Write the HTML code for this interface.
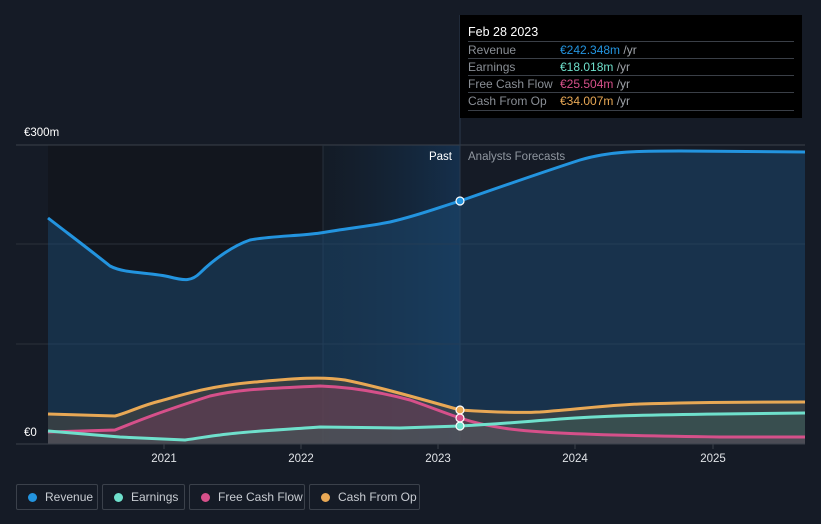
<!DOCTYPE html>
<html><head><style>
html,body{margin:0;background:#151b26;width:821px;height:524px;overflow:hidden;font-family:"Liberation Sans",sans-serif;}
.tt{position:absolute;left:460px;top:15px;width:342px;height:103px;background:#000;}
.tt .h{position:absolute;left:8px;top:10px;color:#fff;font-size:12.5px;}
.tt .r{position:absolute;left:8px;width:326px;height:17px;border-top:1px solid #3a3f47;font-size:12px;color:#8a8f96;line-height:17px;white-space:nowrap;}
.tt .r span{position:absolute;left:92px;}
.tt .r i{font-style:normal;color:#a0a4aa;}
.lg{position:absolute;top:484px;height:26px;border:1px solid #3b414b;border-radius:2px;color:#c8ccd2;font-size:12px;line-height:24px;box-sizing:border-box;white-space:nowrap;}
.lg b{position:absolute;left:11px;top:8px;width:9px;height:9px;border-radius:50%;}
.lg span{position:absolute;left:28px;}
</style></head><body>
<svg width="821" height="524" style="position:absolute;left:0;top:0">
<defs>
<linearGradient id="hl" x1="0" x2="1" y1="0" y2="0"><stop offset="0" stop-color="#16283a" stop-opacity="0.3"/><stop offset="1" stop-color="#17406a" stop-opacity="0.6"/></linearGradient>
</defs>
<rect x="48" y="145" width="412" height="299" fill="#12161e"/>
<rect x="323" y="145" width="137" height="299" fill="url(#hl)"/>
<line x1="16" y1="145" x2="805" y2="145" stroke="#3a404a"/>
<line x1="16" y1="244" x2="805" y2="244" stroke="#2a303a"/>
<line x1="16" y1="344" x2="805" y2="344" stroke="#2a303a"/>
<line x1="323" y1="145" x2="323" y2="444" stroke="#26303c"/>
<line x1="460" y1="15" x2="460" y2="444" stroke="#2a3a4c"/>
<path d="M48,218 C70,235 90,250 110,266 C125,274 150,272 170,277 C185,281 192,281 200,273 C215,258 235,245 250,240 C270,236 300,236 320,233 C350,228 370,226 390,222 C420,215 440,207 460,201 C500,187 540,173 580,160 C610,151 640,151 680,151 L805,152 L805,444 L48,444 Z" fill="#1b4a72" fill-opacity="0.5"/>
<path d="M48,218 C70,235 90,250 110,266 C125,274 150,272 170,277 C185,281 192,281 200,273 C215,258 235,245 250,240 C270,236 300,236 320,233 C350,228 370,226 390,222 C420,215 440,207 460,201 C500,187 540,173 580,160 C610,151 640,151 680,151 L805,152" fill="none" stroke="#2394df" stroke-width="3"/>
<path d="M48,414 L115,416 C130,412 140,406 160,401 C185,394 210,386 255,382 C290,379 320,376 345,380 C370,385 400,393 460,410 C490,412 520,413 540,412 C580,409 610,405 640,404 C700,402 760,402 805,402 L805,444 L48,444 Z" fill="#5a5040" fill-opacity="0.45"/>
<path d="M48,414 L115,416 C130,412 140,406 160,401 C185,394 210,386 255,382 C290,379 320,376 345,380 C370,385 400,393 460,410 C490,412 520,413 540,412 C580,409 610,405 640,404 C700,402 760,402 805,402" fill="none" stroke="#e8a855" stroke-width="3"/>
<path d="M48,432 L115,430 C140,420 160,412 210,396 C240,389 260,389 320,386 C350,387 380,392 410,400 C430,407 445,413 460,418 C490,428 520,431 560,433 C600,435 640,436 720,437 L805,437 L805,444 L48,444 Z" fill="#7a3b5a" fill-opacity="0.45"/>
<path d="M48,431 L120,437 L185,440 C200,438 210,436 220,435 C250,431 280,430 320,427 L400,428 L460,426 C500,424 520,422 560,419 C600,416 640,415 720,414 L805,413 L805,444 L48,444 Z" fill="#3d6a62" fill-opacity="0.35"/>
<path d="M48,432 L115,430 C140,420 160,412 210,396 C240,389 260,389 320,386 C350,387 380,392 410,400 C430,407 445,413 460,418 C490,428 520,431 560,433 C600,435 640,436 720,437 L805,437" fill="none" stroke="#d6508a" stroke-width="3"/>
<path d="M48,431 L120,437 L185,440 C200,438 210,436 220,435 C250,431 280,430 320,427 L400,428 L460,426 C500,424 520,422 560,419 C600,416 640,415 720,414 L805,413" fill="none" stroke="#6fe0cc" stroke-width="3"/>
<line x1="16" y1="444" x2="805" y2="444" stroke="#3a404a"/>
<g stroke="#3a404a"><line x1="164" y1="444" x2="164" y2="449"/><line x1="301" y1="444" x2="301" y2="449"/><line x1="438" y1="444" x2="438" y2="449"/><line x1="575" y1="444" x2="575" y2="449"/><line x1="713" y1="444" x2="713" y2="449"/></g>
<g stroke="#fff" stroke-width="1.2"><circle cx="460" cy="201" r="4" fill="#2394df"/><circle cx="460" cy="410" r="4" fill="#e8a855"/><circle cx="460" cy="418" r="4" fill="#d6508a"/><circle cx="460" cy="426" r="4" fill="#6fe0cc"/></g>
<g font-family="Liberation Sans" font-size="11.5" fill="#e0e3e7" text-anchor="middle"><text x="164" y="462">2021</text><text x="301" y="462">2022</text><text x="438" y="462">2023</text><text x="575" y="462">2024</text><text x="713" y="462">2025</text></g>
<text x="24" y="136" font-family="Liberation Sans" font-size="11.5" fill="#fff">€300m</text>
<text x="24" y="436" font-family="Liberation Sans" font-size="11.5" fill="#fff">€0</text>
<text x="452" y="160" font-family="Liberation Sans" font-size="11.5" fill="#fff" text-anchor="end">Past</text>
<text x="468" y="160" font-family="Liberation Sans" font-size="11.5" fill="#9097a0">Analysts Forecasts</text>
</svg>
<div class="tt"><div class="h">Feb 28 2023</div>
<div class="r" style="top:26px">Revenue<span style="color:#2394df">€242.348m <i>/yr</i></span></div>
<div class="r" style="top:43px">Earnings<span style="color:#6fe0cc">€18.018m <i>/yr</i></span></div>
<div class="r" style="top:60px">Free Cash Flow<span style="color:#d6508a">€25.504m <i>/yr</i></span></div>
<div class="r" style="top:77px;border-bottom:1px solid #3a3f47">Cash From Op<span style="color:#e8a855">€34.007m <i>/yr</i></span></div>
</div>
<div class="lg" style="left:16px;width:82px"><b style="background:#2394df"></b><span>Revenue</span></div>
<div class="lg" style="left:102px;width:83px"><b style="background:#6fe0cc"></b><span>Earnings</span></div>
<div class="lg" style="left:189px;width:116px"><b style="background:#d6508a"></b><span>Free Cash Flow</span></div>
<div class="lg" style="left:309px;width:111px"><b style="background:#e8a855"></b><span>Cash From Op</span></div>
</body></html>
